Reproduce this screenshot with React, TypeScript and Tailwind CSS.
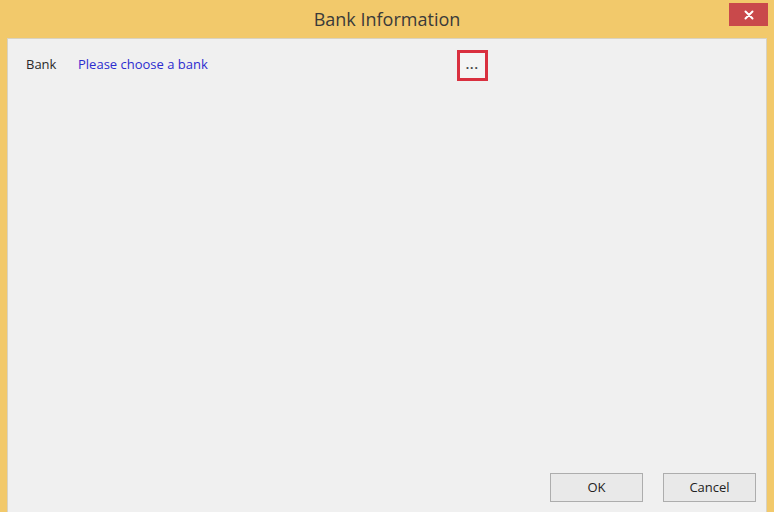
import React from "react";

// Bank Information dialog (Windows 8 style frame)
const BankInformationDialog: React.FC = () => {
  return (
    <div className="w-[774px] h-[512px] bg-[#f2c96b] flex flex-col font-['Open_Sans','Noto_Sans',sans-serif] text-[#2a2a2a]">
      {/* Title bar */}
      <div className="h-[38px] flex items-start shrink-0">
        <div className="w-[80px]" />
        <div className="flex-1 pt-[7px] text-center text-[18px] leading-[24px] text-[#3a3a3a]">
          Bank Information
        </div>
        <div className="w-[80px] flex justify-end pr-[6px] pt-[3px]">
          <button className="w-[39px] h-[23px] bg-[#c9494b] flex items-center justify-center">
            <svg width="10" height="10" viewBox="0 0 10 10">
              <path d="M1.5 1.5 L8.5 8.5 M8.5 1.5 L1.5 8.5" stroke="#ffffff" strokeWidth="2" strokeLinecap="round" />
            </svg>
          </button>
        </div>
      </div>

      {/* Client area */}
      <div className="flex-1 ml-[7px] mr-[7px] bg-[#f0f0f0] border-l border-t border-r border-[#d8d2c2] flex flex-col">
        <div className="flex items-center h-[44px] mt-[4px] text-[13px]">
          <span className="ml-[18px] w-[52px]">Bank</span>
          <span className="text-[#2c2ccf]">Please choose a bank</span>
          <div className="ml-[249px] w-[31px] h-[31px] border-[3px] border-[#d9303f] bg-[#f4f4f4] flex items-center justify-center">
            <span className="text-[12px] leading-none font-bold text-[#444] tracking-[1px] -mt-[1px]">...</span>
          </div>
        </div>

        <div className="flex-1" />

        <div className="flex justify-end gap-[20px] pr-[10px] pb-[10px] text-[13px]">
          <button className="w-[93px] h-[29px] border border-[#adadad] bg-[#e9e9e9] text-[#222]">OK</button>
          <button className="w-[93px] h-[29px] border border-[#adadad] bg-[#e9e9e9] text-[#222]">Cancel</button>
        </div>
      </div>
    </div>
  );
};

export default function App() {
  return <BankInformationDialog />;
}
